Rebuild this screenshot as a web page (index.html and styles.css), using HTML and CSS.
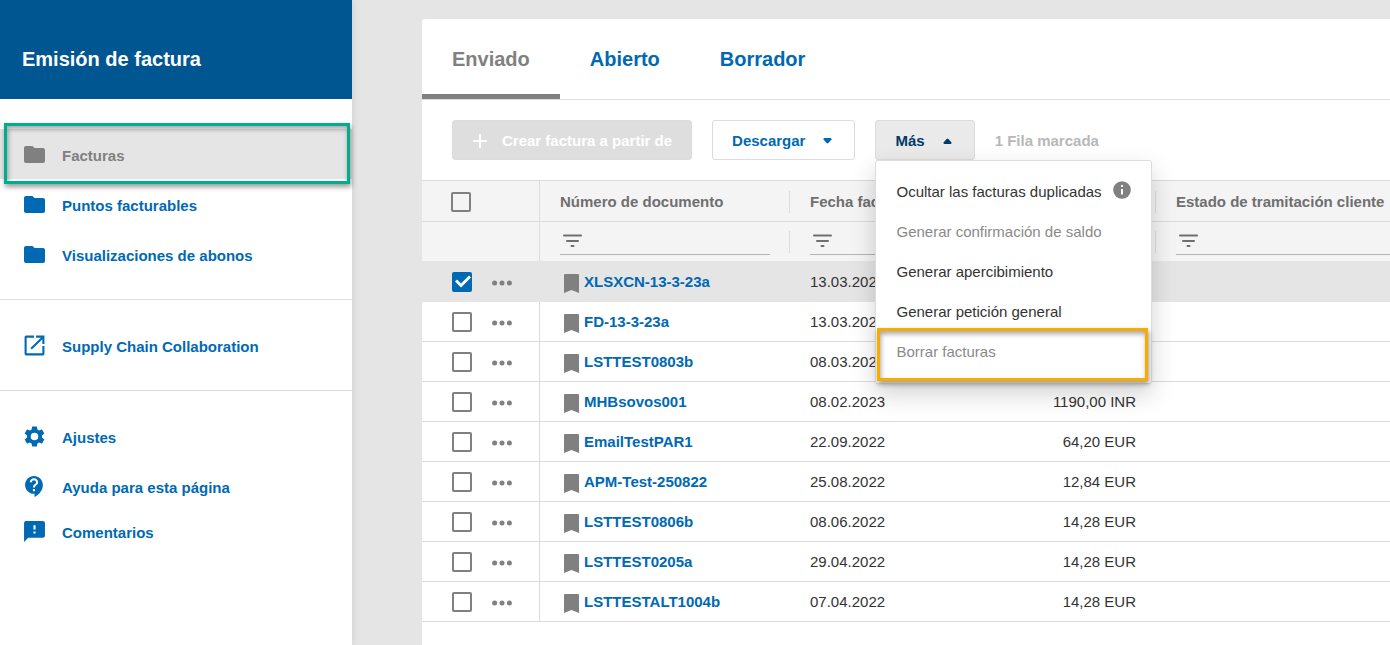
FILE: index.html
```html
<!DOCTYPE html>
<html lang="es">
<head>
<meta charset="utf-8">
<title>Emisión de factura</title>
<link rel="stylesheet" href="styles.css">
</head>
<body>
<svg class="sprite" aria-hidden="true">
  <symbol id="folder" viewBox="0 0 21 17"><path d="M2 0h6.500l2 2H19a2 2 0 0 1 2 2v11a2 2 0 0 1-2 2H2a2 2 0 0 1-2-2V2a2 2 0 0 1 2-2z"/></symbol>
  <symbol id="bookmark" viewBox="0 0 15 19"><path d="M1 0h13A1 1 0 0 1 15 1V19l-7.500-3L0 19V1A1 1 0 0 1 1 0z"/></symbol>
  <symbol id="dots" viewBox="0 0 20 6"><circle cx="2.600" cy="3" r="2.500"/><circle cx="10" cy="3" r="2.500"/><circle cx="17.400" cy="3" r="2.500"/></symbol>
  <symbol id="filter" viewBox="0 0 20 14"><path d="M1 1.500h17M4 7h11M8.500 12h2" fill="none" stroke="currentColor" stroke-width="2" stroke-linecap="round"/></symbol>
</svg>
<div class="app">
  <aside class="sidebar">
    <header class="sidebar-head"><h1>Emisión de factura</h1></header>
    <nav class="nav-group nav-main">
      <a class="nav-item active" href="#"><svg class="folder"><use href="#folder"/></svg>Facturas</a>
      <a class="nav-item" href="#"><svg class="folder"><use href="#folder"/></svg>Puntos facturables</a>
      <a class="nav-item" href="#"><svg class="folder"><use href="#folder"/></svg>Visualizaciones de abonos</a>
    </nav>
    <nav class="nav-group nav-external">
      <a class="nav-item" href="#"><svg viewBox="1 1 22 22"><path d="M19.500 19.500h-15v-15h7V2.500H4a1.500 1.500 0 0 0-1.500 1.500v16A1.500 1.500 0 0 0 4 21.500h16a1.500 1.500 0 0 0 1.500-1.500v-7.500h-2v7zM13.500 2.500v2h4.590l-10 10 1.410 1.410 10-10V10.500h2v-8h-8z"/></svg>Supply Chain Collaboration</a>
    </nav>
    <nav class="nav-group nav-tools">
      <a class="nav-item" href="#"><svg viewBox="1 1 22 22"><path d="M19.140 12.940c.04-.3.060-.610.060-.940 0-.320-.020-.640-.070-.940l2.030-1.580c.180-.140.230-.410.120-.610l-1.920-3.320c-.120-.220-.370-.290-.590-.220l-2.390.960c-.5-.380-1.030-.7-1.620-.940l-.360-2.540c-.04-.240-.240-.410-.480-.410h-3.840c-.240 0-.430.170-.470.410l-.360 2.540c-.590.240-1.130.570-1.620.940l-2.390-.960c-.220-.080-.470 0-.590.220L2.740 8.870c-.120.210-.080.470.120.610l2.030 1.580c-.05.3-.090.630-.090.940s.020.640.070.940l-2.030 1.580c-.180.140-.230.410-.120.610l1.920 3.320c.120.220.370.290.590.220l2.390-.960c.5.380 1.030.7 1.620.940l.360 2.540c.05.240.240.410.480.410h3.840c.240 0 .440-.170.470-.410l.360-2.540c.590-.240 1.130-.560 1.620-.940l2.390.960c.220.080.470 0 .590-.220l1.920-3.320c.120-.220.070-.470-.120-.610l-2.010-1.580zM12 15.600A3.600 3.600 0 1 1 12 8.400a3.600 3.600 0 0 1 0 7.200z"/></svg>Ajustes</a>
      <a class="nav-item" href="#"><svg viewBox="1 1 22 22"><path d="M11.500 2C6.810 2 3 5.810 3 10.500S6.810 19 11.500 19h.5v3c4.860-2.340 8-7 8-11.500C20 5.810 16.190 2 11.500 2zm1 14.500h-2v-2h2v2zm0-3.500h-2c0-3.250 3-3 3-5 0-1.100-.9-2-2-2s-2 .9-2 2h-2c0-2.210 1.790-4 4-4s4 1.790 4 4c0 2.500-3 2.750-3 5z"/></svg>Ayuda para esta página</a>
      <a class="nav-item short" href="#"><svg viewBox="1 1 22 22"><path d="M20 2H4a2 2 0 0 0-2 2v18l4-4h14a2 2 0 0 0 2-2V4a2 2 0 0 0-2-2zm-7 12h-2v-2h2v2zm0-4h-2V6h2v4z"/></svg>Comentarios</a>
    </nav>
  </aside>

  <main class="panel">
    <nav class="tabs">
      <a class="tab current" href="#">Enviado</a>
      <a class="tab" href="#">Abierto</a>
      <a class="tab" href="#">Borrador</a>
    </nav>
    <div class="toolbar">
      <button class="btn create" type="button" disabled><svg viewBox="0 0 16 16"><path d="M8 1v14M1 8h14"/></svg>Crear factura a partir de</button>
      <button class="btn" type="button">Descargar<svg class="caret" viewBox="0 0 8 6"><path d="M0 1Q0 0 1 0h6q1 0 1 1v.6L4.900 5.100q-.9.800-1.800 0L0 1.600z"/></svg></button>
      <div class="more">
        <button class="btn open" type="button" aria-expanded="true">Más<svg class="caret up" viewBox="0 0 8 6"><path d="M0 1Q0 0 1 0h6q1 0 1 1v.6L4.900 5.100q-.9.800-1.800 0L0 1.600z"/></svg></button>
        <div class="menu">
          <button type="button">Ocultar las facturas duplicadas<svg class="info" viewBox="0 0 18 18"><circle cx="9" cy="9" r="8.800"/><path d="M8 4h2v2H8zM8 8h2v5.500H8z" fill="#fff"/></svg></button>
          <button type="button" disabled>Generar confirmación de saldo</button>
          <button type="button">Generar apercibimiento</button>
          <button type="button">Generar petición general</button>
          <button class="marked" type="button" disabled>Borrar facturas</button>
        </div>
      </div>
      <span class="count">1 Fila marcada</span>
    </div>
    <table class="grid">
      <colgroup><col class="c-select"><col class="c-number"><col class="c-date"><col class="c-amount"><col></colgroup>
      <thead>
        <tr class="titles">
          <th class="select"><input type="checkbox" aria-label="Marcar todas"></th>
          <th><div class="head">Número de documento</div></th>
          <th><div class="head">Fecha fac</div></th>
          <th><div class="head"></div></th>
          <th><div class="head last">Estado de tramitación cliente</div></th>
        </tr>
        <tr class="filters">
          <td class="select"></td>
          <td><div class="head"><label class="filter"><svg><use href="#filter"/></svg><input type="text" aria-label="Filtrar número de documento"></label></div></td>
          <td><div class="head"><label class="filter"><svg><use href="#filter"/></svg><input type="text" aria-label="Filtrar fecha"></label></div></td>
          <td><div class="head"><label class="filter"><svg><use href="#filter"/></svg><input type="text" aria-label="Filtrar importe"></label></div></td>
          <td><div class="head last"><label class="filter"><svg><use href="#filter"/></svg><input type="text" aria-label="Filtrar estado"></label></div></td>
        </tr>
      </thead>
      <tbody>
        <tr class="checked"><td class="select"><div class="tools"><input type="checkbox" aria-label="Marcar XLSXCN-13-3-23a" checked><button type="button" aria-label="Acciones"><svg><use href="#dots"/></svg></button></div></td><td><a class="doc" href="#"><svg><use href="#bookmark"/></svg>XLSXCN-13-3-23a</a></td><td>13.03.2023</td><td class="amount"></td><td></td></tr>
        <tr><td class="select"><div class="tools"><input type="checkbox" aria-label="Marcar FD-13-3-23a"><button type="button" aria-label="Acciones"><svg><use href="#dots"/></svg></button></div></td><td><a class="doc" href="#"><svg><use href="#bookmark"/></svg>FD-13-3-23a</a></td><td>13.03.2023</td><td class="amount"></td><td></td></tr>
        <tr><td class="select"><div class="tools"><input type="checkbox" aria-label="Marcar LSTTEST0803b"><button type="button" aria-label="Acciones"><svg><use href="#dots"/></svg></button></div></td><td><a class="doc" href="#"><svg><use href="#bookmark"/></svg>LSTTEST0803b</a></td><td>08.03.2023</td><td class="amount"></td><td></td></tr>
        <tr><td class="select"><div class="tools"><input type="checkbox" aria-label="Marcar MHBsovos001"><button type="button" aria-label="Acciones"><svg><use href="#dots"/></svg></button></div></td><td><a class="doc" href="#"><svg><use href="#bookmark"/></svg>MHBsovos001</a></td><td>08.02.2023</td><td class="amount">1190,00 INR</td><td></td></tr>
        <tr><td class="select"><div class="tools"><input type="checkbox" aria-label="Marcar EmailTestPAR1"><button type="button" aria-label="Acciones"><svg><use href="#dots"/></svg></button></div></td><td><a class="doc" href="#"><svg><use href="#bookmark"/></svg>EmailTestPAR1</a></td><td>22.09.2022</td><td class="amount">64,20 EUR</td><td></td></tr>
        <tr><td class="select"><div class="tools"><input type="checkbox" aria-label="Marcar APM-Test-250822"><button type="button" aria-label="Acciones"><svg><use href="#dots"/></svg></button></div></td><td><a class="doc" href="#"><svg><use href="#bookmark"/></svg>APM-Test-250822</a></td><td>25.08.2022</td><td class="amount">12,84 EUR</td><td></td></tr>
        <tr><td class="select"><div class="tools"><input type="checkbox" aria-label="Marcar LSTTEST0806b"><button type="button" aria-label="Acciones"><svg><use href="#dots"/></svg></button></div></td><td><a class="doc" href="#"><svg><use href="#bookmark"/></svg>LSTTEST0806b</a></td><td>08.06.2022</td><td class="amount">14,28 EUR</td><td></td></tr>
        <tr><td class="select"><div class="tools"><input type="checkbox" aria-label="Marcar LSTTEST0205a"><button type="button" aria-label="Acciones"><svg><use href="#dots"/></svg></button></div></td><td><a class="doc" href="#"><svg><use href="#bookmark"/></svg>LSTTEST0205a</a></td><td>29.04.2022</td><td class="amount">14,28 EUR</td><td></td></tr>
        <tr><td class="select"><div class="tools"><input type="checkbox" aria-label="Marcar LSTTESTALT1004b"><button type="button" aria-label="Acciones"><svg><use href="#dots"/></svg></button></div></td><td><a class="doc" href="#"><svg><use href="#bookmark"/></svg>LSTTESTALT1004b</a></td><td>07.04.2022</td><td class="amount">14,28 EUR</td><td></td></tr>
      </tbody>
    </table>
  </main>
</div>
</body>
</html>
```

FILE: styles.css
```css
* { box-sizing: border-box; }
body {
  margin: 0;
  background: #e5e5e5;
  color: #333;
  font: 15px/20px "Liberation Sans", Arial, sans-serif;
}
a { color: #0069b4; text-decoration: none; }
button, input { font: inherit; }
svg { display: block; fill: currentColor; flex: none; }
.sprite { position: absolute; width: 0; height: 0; }

.app { display: flex; min-height: 100vh; }

/* Sidebar */
.sidebar {
  flex: 0 0 352px;
  background: #fff;
  box-shadow: 0 0 8px rgba(0, 0, 0, .1);
}
.sidebar-head {
  display: flex;
  align-items: center;
  height: 99px;
  padding: 18px 22px 0;
  background: #005691;
  color: #fff;
}
h1 { margin: 0; font-size: 20px; line-height: 24px; }
.nav-group { border-bottom: 1px solid #dcdcdc; }
.nav-main { padding: 30px 0 20px; }
.nav-external { padding: 21px 0 19px; }
.nav-tools { padding-top: 21px; border-bottom: 0; }
.nav-item {
  position: relative;
  display: flex;
  align-items: center;
  gap: 16px;
  height: 50px;
  padding: 2px 22px 0 23px;
  font-weight: bold;
}
.nav-item.short { height: 40px; }
.nav-item svg { width: 23px; height: 23px; margin-bottom: 4px; }
.nav-main .nav-item { gap: 17px; padding: 4px 22px 0 24px; }
.nav-item .folder { width: 21px; height: 17px; margin-bottom: 3px; }
.nav-item.active { background: #e5e5e5; color: #808080; }
.nav-item.active::after, .menu .marked::after {
  content: "";
  position: absolute;
  border: 3px solid #00ad8d;
  box-shadow: 1px 3px 5px rgba(0, 0, 0, .4), inset 1px 3px 5px rgba(0, 0, 0, .35);
}
.nav-item.active::after { z-index: 1; inset: -6px 2px -5px 4px; }

/* Panel */
.panel {
  flex: 1;
  min-width: 0;
  margin: 19px 0 0 70px;
  background: #fff;
  border-top-left-radius: 3px;
}
.tabs { display: flex; height: 81px; border-bottom: 1px solid #dcdcdc; }
.tab {
  padding: 28px 30px 0;
  border-bottom: 5px solid transparent;
  font-size: 20px;
  line-height: 24px;
  font-weight: bold;
}
.tab.current { color: #808080; border-color: #808080; }
.toolbar {
  display: flex;
  align-items: center;
  gap: 20px;
  padding: 20px 30px;
}
.btn {
  display: flex;
  align-items: center;
  gap: 18px;
  height: 40px;
  padding: 1px 22px 0 19px;
  border: 1px solid #dcdcdc;
  border-radius: 3px;
  background: #fff;
  color: #0069b4;
  font-weight: bold;
}
.btn.create { gap: 14px; padding: 1px 19px 0 19px; background: #dedede; color: #fff; }
.create svg { width: 16px; height: 16px; stroke: #fff; stroke-width: 2; }
.btn.open { background: #eaeaea; color: #003a66; }
.caret { width: 9px; height: 6px; }
.caret.up { transform: rotate(180deg); }
.count { padding-top: 1px; color: #b8b8b8; font-weight: bold; }

.more { position: relative; }
.menu {
  position: absolute;
  z-index: 2;
  top: 40px;
  left: 0;
  width: 277px;
  padding: 11px 0;
  border: 1px solid #dcdcdc;
  border-radius: 3px;
  background: #fff;
  box-shadow: 0 10px 24px rgba(0, 0, 0, .18);
}
.menu button {
  position: relative;
  display: flex;
  align-items: center;
  gap: 11px;
  width: 100%;
  height: 40px;
  padding: 0 20px;
  border: 0;
  background: none;
  color: #333;
  white-space: nowrap;
}
.menu button:disabled { color: #8a8a8a; }
.menu .marked::after { inset: -4px 3px -9px 1px; border-color: #f9ab00; }
.info { width: 18px; height: 18px; margin-bottom: 4px; color: #808080; }

/* Table */
.grid {
  width: 100%;
  table-layout: fixed;
  border-collapse: separate;
  border-spacing: 0;
  border-top: 1px solid #dcdcdc;
}
.c-select { width: 118px; }
.c-number { width: 250px; }
.c-date { width: 160px; }
.c-amount { width: 206px; }
th, td { padding: 0; border-bottom: 1px solid #dcdcdc; text-align: left; white-space: nowrap; }
thead { background: #f4f4f4; color: #6f6f6f; }
.titles th { height: 41px; padding-top: 2px; }
.filters td { height: 40px; border-bottom-color: #e5e5e5; }
.select { border-right: 1px solid #dcdcdc; }
th.select { padding-left: 29px; }
.head {
  display: flex;
  align-items: center;
  height: 22px;
  padding: 0 19px 0 20px;
  border-right: 1px solid #dcdcdc;
}
.head.last { padding-right: 0; border-right: 0; }
.filter {
  display: flex;
  align-items: center;
  width: 100%;
  height: 26px;
  padding-left: 3px;
  border-bottom: 1px solid #b4b4b4;
}
.filter svg { width: 20px; height: 14px; }
.filter input { flex: 1; min-width: 0; height: 20px; border: 0; background: none; outline: 0; }
tbody td { height: 40px; padding-left: 20px; }
tbody .select { padding-left: 30px; }
tbody .amount { padding: 0 20px 0 0; text-align: right; }
.checked td { background: #e5e5e5; border-color: #e5e5e5; }
input[type="checkbox"] {
  display: block;
  appearance: none;
  width: 20px;
  height: 20px;
  margin: 0;
  border: 2px solid #808080;
  border-radius: 2px;
  background: #fff;
}
th input[type="checkbox"] { background: #f4f4f4; }
input[type="checkbox"]:checked {
  display: grid;
  place-items: center;
  border-color: #0069b4;
  background: #0069b4;
}
input[type="checkbox"]:checked::before {
  content: "";
  width: 18px;
  height: 14px;
  background: #fff;
  clip-path: polygon(1px 7px, 3px 5px, 7px 9px, 15px 1px, 17px 3px, 7px 13px);
}
.tools { display: flex; align-items: center; gap: 20px; }
.tools button { padding: 2px 0 0; border: 0; background: none; color: #808080; }
.tools svg { width: 20px; height: 6px; }
.doc { display: flex; align-items: center; gap: 5px; padding-left: 4px; font-weight: bold; }
.doc svg { width: 15px; height: 19px; margin-top: 3px; color: #808080; }
```
